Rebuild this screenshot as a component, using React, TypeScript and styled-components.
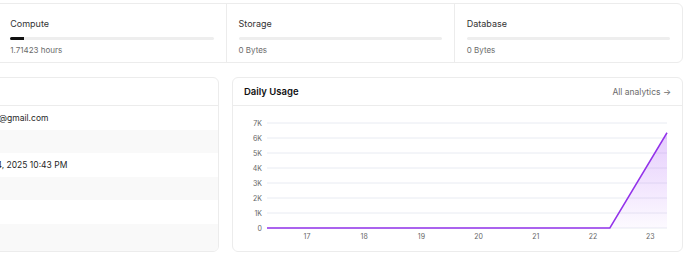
import React from "react";
import styled, { createGlobalStyle } from "styled-components";

const GlobalStyle = createGlobalStyle`
  *, *::before, *::after {
    box-sizing: border-box;
  }
  body {
    margin: 0;
    background: #ffffff;
    font-family: Inter, "Noto Sans", sans-serif;
    color: #1f1f1f;
    overflow: hidden;
  }
`;

const usage = [
  { name: "Network", value: "12.4 MB", fill: 8 },
  { name: "Compute", value: "1.71423 hours", fill: 14 },
  { name: "Storage", value: "0 Bytes", fill: 0 },
  { name: "Database", value: "0 Bytes", fill: 0 },
];

const details = [
  { label: "Email", value: "jsmith@gmail.com" },
  { label: "Plan", value: "Free" },
  { label: "Created", value: "Mar 14, 2025 10:43 PM" },
  { label: "Region", value: "" },
  { label: "Status", value: "" },
  { label: "Team", value: "" },
];

const yTicks = ["0", "1K", "2K", "3K", "4K", "5K", "6K", "7K"];
const xTicks = ["17", "18", "19", "20", "21", "22", "23"];
const points = [0, 0, 0, 0, 0, 0, 0, 6350];

const Page = styled.div`
  margin-left: -232px;
  width: 915px;
  padding-top: 3px;
  display: flex;
  flex-direction: column;
  gap: 14px;
`;

const UsageCard = styled.div`
  display: grid;
  grid-template-columns: repeat(4, 1fr);
  height: 60px;
  border: 1px solid #ececec;
  border-radius: 6px;
  background: #fff;
`;

const UsageItem = styled.div`
  display: flex;
  flex-direction: column;
  padding: 0 12px;
  padding-top: 13px;
  & + & {
    border-left: 1px solid #ececec;
  }
`;

const UsageLabel = styled.div`
  font-size: 9px;
  color: #333;
  line-height: 14px;
`;

const Track = styled.div`
  margin-top: 6px;
  height: 3px;
  border-radius: 2px;
  background: #eeeeee;
  overflow: hidden;
`;

const Fill = styled.div`
  height: 100%;
  background: #111;
`;

const UsageValue = styled.div`
  margin-top: 4px;
  font-size: 8px;
  color: #6b6b6b;
  line-height: 12px;
`;

const Row = styled.div`
  display: grid;
  grid-template-columns: 1fr 1fr;
  gap: 13px;
  height: 175px;
`;

const Card = styled.div`
  display: flex;
  flex-direction: column;
  border: 1px solid #ececec;
  border-radius: 6px;
  background: #fff;
  overflow: hidden;
`;

const CardHeader = styled.div`
  height: 28px;
  flex-shrink: 0;
  display: flex;
  align-items: center;
  justify-content: space-between;
  padding: 0 11px;
  border-bottom: 1px solid #ececec;
`;

const CardTitle = styled.div`
  font-size: 9.5px;
  font-weight: 600;
  color: #111;
`;

const HeaderLink = styled.div`
  font-size: 8.5px;
  color: #6b6b6b;
`;

const DetailList = styled.div`
  flex: 1;
  display: flex;
  flex-direction: column;
`;

const DetailRow = styled.div<{ $striped: boolean }>`
  height: 23.5px;
  flex-shrink: 0;
  display: grid;
  grid-template-columns: 194px 1fr;
  align-items: center;
  padding: 0 12px;
  font-size: 8.5px;
  color: #1f1f1f;
  background: ${(p) => (p.$striped ? "#f9f9f9" : "#fff")};
  &:last-child {
    flex: 1;
  }
`;

const DetailLabel = styled.span`
  color: #6b6b6b;
`;

const ChartArea = styled.div`
  flex: 1;
`;

const Chart = () => {
  const left = 34;
  const right = 434;
  const base = 122;
  const step = 15;
  const span = (right - left) / (points.length - 1);
  const px = (i: number) => left + i * span;
  const py = (v: number) => base - (v / 1000) * step;
  const line = points.map((v, i) => `${i ? "L" : "M"}${px(i)},${py(v)}`).join(" ");
  const area = `${line} L${right},${base} L${left},${base} Z`;
  return (
    <svg width="100%" height="146" viewBox="0 0 449 146">
      <defs>
        <linearGradient id="usageFill" x1="0" y1="0" x2="0" y2="1">
          <stop offset="0%" stopColor="#a855f7" stopOpacity="0.3" />
          <stop offset="100%" stopColor="#a855f7" stopOpacity="0.03" />
        </linearGradient>
      </defs>
      {yTicks.map((t, i) => (
        <g key={t}>
          <line x1={left} x2={right} y1={base - i * step} y2={base - i * step} stroke="#e8ebf2" strokeWidth="1" />
          <text x={left - 5} y={base - i * step + 2.5} textAnchor="end" fontSize="7" fill="#666" fontFamily="Inter, sans-serif">
            {t}
          </text>
        </g>
      ))}
      <path d={area} fill="url(#usageFill)" />
      <path d={line} fill="none" stroke="#9333ea" strokeWidth="1.5" />
      {xTicks.map((t, i) => (
        <text key={t} x={74 + i * 57.2} y={133} textAnchor="middle" fontSize="7" fill="#666" fontFamily="Inter, sans-serif">
          {t}
        </text>
      ))}
    </svg>
  );
};

export default function App() {
  return (
    <>
      <GlobalStyle />
      <Page>
        <UsageCard>
          {usage.map((u) => (
            <UsageItem key={u.name}>
              <UsageLabel>{u.name}</UsageLabel>
              <Track>
                <Fill style={{ width: `${u.fill}px` }} />
              </Track>
              <UsageValue>{u.value}</UsageValue>
            </UsageItem>
          ))}
        </UsageCard>
        <Row>
          <Card>
            <CardHeader>
              <CardTitle>Account</CardTitle>
            </CardHeader>
            <DetailList>
              {details.map((d, i) => (
                <DetailRow key={d.label} $striped={i % 2 === 1}>
                  <DetailLabel>{d.label}</DetailLabel>
                  <span>{d.value}</span>
                </DetailRow>
              ))}
            </DetailList>
          </Card>
          <Card>
            <CardHeader>
              <CardTitle>Daily Usage</CardTitle>
              <HeaderLink>All analytics →</HeaderLink>
            </CardHeader>
            <ChartArea>
              <Chart />
            </ChartArea>
          </Card>
        </Row>
      </Page>
    </>
  );
}
